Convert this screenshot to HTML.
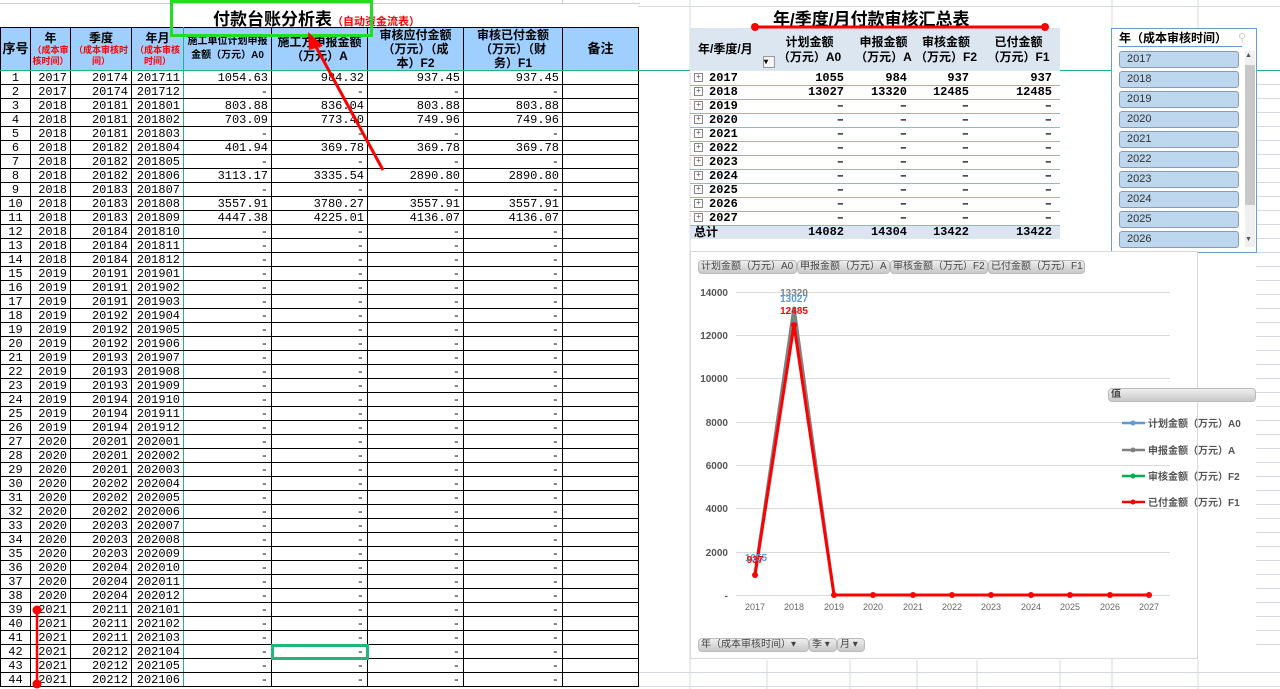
<!DOCTYPE html>
<html><head><meta charset="utf-8"><style>
*{margin:0;padding:0;box-sizing:border-box}
body{width:1280px;height:689px;overflow:hidden;background:#fff;position:relative;font-family:"Liberation Sans","Noto Sans CJK SC",sans-serif}
.abs{position:absolute}
table{border-collapse:collapse;table-layout:fixed}
#lt{position:absolute;left:0;top:27px;width:638px;font-family:"Liberation Mono","Noto Sans CJK SC",monospace;font-size:12px}
#lt td{border:1px solid #000;height:14px;line-height:12px;text-align:right;padding:0 3px;white-space:nowrap;overflow:hidden}
#lt td:first-child{text-align:center;padding:0}
#lt tr.h td{background:#9fcfff;height:43px;text-align:center;font-family:"Liberation Sans","Noto Sans CJK SC",sans-serif;font-weight:bold;font-size:12px;line-height:14px;padding:0;white-space:normal}
#lt td.g{border-right:1px solid #1fb87a}
.r{color:#f00;font-size:9px;line-height:11px;display:block}
#pt{position:absolute;left:690px;top:28px;width:370px;font-family:"Liberation Mono","Noto Sans CJK SC",monospace;font-size:12px;font-weight:bold}
#pt td{height:14px;line-height:12px;text-align:right;padding:0 8px 0 0;border-bottom:1px solid #95b3d7;white-space:nowrap}
#pt tr.h td{background:#dce6f1;height:43px;text-align:center;font-family:"Liberation Sans","Noto Sans CJK SC",sans-serif;line-height:15px;padding:0;border:none}
#pt td.y{text-align:left;padding-left:4px}
.pl{display:inline-block;width:9px;height:9px;border:1px solid #888;font-size:8px;line-height:7px;text-align:center;margin-right:6px;color:#555;font-weight:normal;vertical-align:middle}
#pt tr.t td{background:#dce6f1;border:none}
.sl{position:absolute;left:1119px;width:120px;height:17px;background:#bdd7ee;border:1px solid #8a9bb0;border-radius:3px;font-size:11px;line-height:15px;padding-left:7px;color:#333}
.btn{position:absolute;height:14px;background:linear-gradient(#eee,#c8c8c8);border:1px solid #bbb;border-radius:4px;font-size:10px;line-height:12px;color:#444;white-space:nowrap;padding-left:2px;overflow:hidden}
</style></head><body>
<svg class="abs" style="left:638px;top:0" width="642" height="689">
<g stroke="#d4d8e0" stroke-width="1">
<line x1="52" y1="0" x2="52" y2="689"/>
<line x1="0" y1="6.5" x2="642" y2="6.5"/>
<line x1="474" y1="0" x2="474" y2="689"/>
<line x1="560" y1="0" x2="560" y2="28"/>
<line x1="560" y1="660" x2="560" y2="689"/>
<line x1="129" y1="660" x2="129" y2="689"/><line x1="212" y1="660" x2="212" y2="689"/><line x1="279" y1="660" x2="279" y2="689"/><line x1="339" y1="660" x2="339" y2="689"/><line x1="422" y1="660" x2="422" y2="689"/>
<line x1="0" y1="672.5" x2="642" y2="672.5"/><line x1="0" y1="686.5" x2="642" y2="686.5"/>
</g>
<g stroke="#d4d8e0"><line x1="618" y1="84.5" x2="642" y2="84.5"/><line x1="618" y1="98.5" x2="642" y2="98.5"/><line x1="618" y1="112.5" x2="642" y2="112.5"/><line x1="618" y1="126.5" x2="642" y2="126.5"/><line x1="618" y1="140.5" x2="642" y2="140.5"/><line x1="618" y1="154.5" x2="642" y2="154.5"/><line x1="618" y1="168.5" x2="642" y2="168.5"/><line x1="618" y1="182.5" x2="642" y2="182.5"/><line x1="618" y1="196.5" x2="642" y2="196.5"/><line x1="618" y1="210.5" x2="642" y2="210.5"/><line x1="618" y1="224.5" x2="642" y2="224.5"/><line x1="618" y1="238.5" x2="642" y2="238.5"/><line x1="618" y1="252.5" x2="642" y2="252.5"/><line x1="618" y1="266.5" x2="642" y2="266.5"/><line x1="618" y1="280.5" x2="642" y2="280.5"/><line x1="618" y1="294.5" x2="642" y2="294.5"/><line x1="618" y1="308.5" x2="642" y2="308.5"/><line x1="618" y1="322.5" x2="642" y2="322.5"/><line x1="618" y1="336.5" x2="642" y2="336.5"/><line x1="618" y1="350.5" x2="642" y2="350.5"/><line x1="618" y1="364.5" x2="642" y2="364.5"/><line x1="618" y1="378.5" x2="642" y2="378.5"/><line x1="618" y1="392.5" x2="642" y2="392.5"/><line x1="618" y1="406.5" x2="642" y2="406.5"/><line x1="618" y1="420.5" x2="642" y2="420.5"/><line x1="618" y1="434.5" x2="642" y2="434.5"/><line x1="618" y1="448.5" x2="642" y2="448.5"/><line x1="618" y1="462.5" x2="642" y2="462.5"/><line x1="618" y1="476.5" x2="642" y2="476.5"/><line x1="618" y1="490.5" x2="642" y2="490.5"/><line x1="618" y1="504.5" x2="642" y2="504.5"/><line x1="618" y1="518.5" x2="642" y2="518.5"/><line x1="618" y1="532.5" x2="642" y2="532.5"/><line x1="618" y1="546.5" x2="642" y2="546.5"/><line x1="618" y1="560.5" x2="642" y2="560.5"/><line x1="618" y1="574.5" x2="642" y2="574.5"/><line x1="618" y1="588.5" x2="642" y2="588.5"/><line x1="618" y1="602.5" x2="642" y2="602.5"/><line x1="618" y1="616.5" x2="642" y2="616.5"/><line x1="618" y1="630.5" x2="642" y2="630.5"/><line x1="618" y1="644.5" x2="642" y2="644.5"/></g>
</svg>
<svg class="abs" style="left:0;top:0" width="640" height="28"><g stroke="#ccc"><line x1="0" y1="3.5" x2="640" y2="3.5"/><line x1="183.5" y1="0" x2="183.5" y2="4"/><line x1="562.5" y1="0" x2="562.5" y2="4"/></g></svg>
<div class="abs" style="left:213px;top:5px;font-size:17px;font-weight:bold;white-space:nowrap">付款台账分析表<span style="color:#f00;font-size:11px;font-weight:bold">（自动资金流表）</span></div>
<table id="lt">
<colgroup><col style="width:30px"><col style="width:40px"><col style="width:61px"><col style="width:52px"><col style="width:88px"><col style="width:96px"><col style="width:96px"><col style="width:99px"><col style="width:76px"></colgroup>
<tr class="h"><td style="font-size:13px">序号</td><td>年<span class="r">（成本审核时间）</span></td><td>季度<span class="r">（成本审核时间）</span></td><td class="g">年月<span class="r">（成本审核时间）</span></td><td style="font-size:10px">施工单位计划申报<br>金额（万元）A0</td><td>施工方申报金额<br>（万元）A</td><td>审核应付金额<br>（万元）（成<br>本）F2</td><td>审核已付金额<br>（万元）（财<br>务）F1</td><td style="font-size:13px">备注</td></tr>
<tr><td>1</td><td>2017</td><td>20174</td><td class="g">201711</td><td>1054.63</td><td>984.32</td><td>937.45</td><td>937.45</td><td></td></tr>
<tr><td>2</td><td>2017</td><td>20174</td><td class="g">201712</td><td>-</td><td>-</td><td>-</td><td>-</td><td></td></tr>
<tr><td>3</td><td>2018</td><td>20181</td><td class="g">201801</td><td>803.88</td><td>836.04</td><td>803.88</td><td>803.88</td><td></td></tr>
<tr><td>4</td><td>2018</td><td>20181</td><td class="g">201802</td><td>703.09</td><td>773.40</td><td>749.96</td><td>749.96</td><td></td></tr>
<tr><td>5</td><td>2018</td><td>20181</td><td class="g">201803</td><td>-</td><td>-</td><td>-</td><td>-</td><td></td></tr>
<tr><td>6</td><td>2018</td><td>20182</td><td class="g">201804</td><td>401.94</td><td>369.78</td><td>369.78</td><td>369.78</td><td></td></tr>
<tr><td>7</td><td>2018</td><td>20182</td><td class="g">201805</td><td>-</td><td>-</td><td>-</td><td>-</td><td></td></tr>
<tr><td>8</td><td>2018</td><td>20182</td><td class="g">201806</td><td>3113.17</td><td>3335.54</td><td>2890.80</td><td>2890.80</td><td></td></tr>
<tr><td>9</td><td>2018</td><td>20183</td><td class="g">201807</td><td>-</td><td>-</td><td>-</td><td>-</td><td></td></tr>
<tr><td>10</td><td>2018</td><td>20183</td><td class="g">201808</td><td>3557.91</td><td>3780.27</td><td>3557.91</td><td>3557.91</td><td></td></tr>
<tr><td>11</td><td>2018</td><td>20183</td><td class="g">201809</td><td>4447.38</td><td>4225.01</td><td>4136.07</td><td>4136.07</td><td></td></tr>
<tr><td>12</td><td>2018</td><td>20184</td><td class="g">201810</td><td>-</td><td>-</td><td>-</td><td>-</td><td></td></tr>
<tr><td>13</td><td>2018</td><td>20184</td><td class="g">201811</td><td>-</td><td>-</td><td>-</td><td>-</td><td></td></tr>
<tr><td>14</td><td>2018</td><td>20184</td><td class="g">201812</td><td>-</td><td>-</td><td>-</td><td>-</td><td></td></tr>
<tr><td>15</td><td>2019</td><td>20191</td><td class="g">201901</td><td>-</td><td>-</td><td>-</td><td>-</td><td></td></tr>
<tr><td>16</td><td>2019</td><td>20191</td><td class="g">201902</td><td>-</td><td>-</td><td>-</td><td>-</td><td></td></tr>
<tr><td>17</td><td>2019</td><td>20191</td><td class="g">201903</td><td>-</td><td>-</td><td>-</td><td>-</td><td></td></tr>
<tr><td>18</td><td>2019</td><td>20192</td><td class="g">201904</td><td>-</td><td>-</td><td>-</td><td>-</td><td></td></tr>
<tr><td>19</td><td>2019</td><td>20192</td><td class="g">201905</td><td>-</td><td>-</td><td>-</td><td>-</td><td></td></tr>
<tr><td>20</td><td>2019</td><td>20192</td><td class="g">201906</td><td>-</td><td>-</td><td>-</td><td>-</td><td></td></tr>
<tr><td>21</td><td>2019</td><td>20193</td><td class="g">201907</td><td>-</td><td>-</td><td>-</td><td>-</td><td></td></tr>
<tr><td>22</td><td>2019</td><td>20193</td><td class="g">201908</td><td>-</td><td>-</td><td>-</td><td>-</td><td></td></tr>
<tr><td>23</td><td>2019</td><td>20193</td><td class="g">201909</td><td>-</td><td>-</td><td>-</td><td>-</td><td></td></tr>
<tr><td>24</td><td>2019</td><td>20194</td><td class="g">201910</td><td>-</td><td>-</td><td>-</td><td>-</td><td></td></tr>
<tr><td>25</td><td>2019</td><td>20194</td><td class="g">201911</td><td>-</td><td>-</td><td>-</td><td>-</td><td></td></tr>
<tr><td>26</td><td>2019</td><td>20194</td><td class="g">201912</td><td>-</td><td>-</td><td>-</td><td>-</td><td></td></tr>
<tr><td>27</td><td>2020</td><td>20201</td><td class="g">202001</td><td>-</td><td>-</td><td>-</td><td>-</td><td></td></tr>
<tr><td>28</td><td>2020</td><td>20201</td><td class="g">202002</td><td>-</td><td>-</td><td>-</td><td>-</td><td></td></tr>
<tr><td>29</td><td>2020</td><td>20201</td><td class="g">202003</td><td>-</td><td>-</td><td>-</td><td>-</td><td></td></tr>
<tr><td>30</td><td>2020</td><td>20202</td><td class="g">202004</td><td>-</td><td>-</td><td>-</td><td>-</td><td></td></tr>
<tr><td>31</td><td>2020</td><td>20202</td><td class="g">202005</td><td>-</td><td>-</td><td>-</td><td>-</td><td></td></tr>
<tr><td>32</td><td>2020</td><td>20202</td><td class="g">202006</td><td>-</td><td>-</td><td>-</td><td>-</td><td></td></tr>
<tr><td>33</td><td>2020</td><td>20203</td><td class="g">202007</td><td>-</td><td>-</td><td>-</td><td>-</td><td></td></tr>
<tr><td>34</td><td>2020</td><td>20203</td><td class="g">202008</td><td>-</td><td>-</td><td>-</td><td>-</td><td></td></tr>
<tr><td>35</td><td>2020</td><td>20203</td><td class="g">202009</td><td>-</td><td>-</td><td>-</td><td>-</td><td></td></tr>
<tr><td>36</td><td>2020</td><td>20204</td><td class="g">202010</td><td>-</td><td>-</td><td>-</td><td>-</td><td></td></tr>
<tr><td>37</td><td>2020</td><td>20204</td><td class="g">202011</td><td>-</td><td>-</td><td>-</td><td>-</td><td></td></tr>
<tr><td>38</td><td>2020</td><td>20204</td><td class="g">202012</td><td>-</td><td>-</td><td>-</td><td>-</td><td></td></tr>
<tr><td>39</td><td>2021</td><td>20211</td><td class="g">202101</td><td>-</td><td>-</td><td>-</td><td>-</td><td></td></tr>
<tr><td>40</td><td>2021</td><td>20211</td><td class="g">202102</td><td>-</td><td>-</td><td>-</td><td>-</td><td></td></tr>
<tr><td>41</td><td>2021</td><td>20211</td><td class="g">202103</td><td>-</td><td>-</td><td>-</td><td>-</td><td></td></tr>
<tr><td>42</td><td>2021</td><td>20212</td><td class="g">202104</td><td>-</td><td style="outline:3px solid #1fb87a;outline-offset:-2px">-</td><td>-</td><td>-</td><td></td></tr>
<tr><td>43</td><td>2021</td><td>20212</td><td class="g">202105</td><td>-</td><td>-</td><td>-</td><td>-</td><td></td></tr>
<tr><td>44</td><td>2021</td><td>20212</td><td class="g">202106</td><td>-</td><td>-</td><td>-</td><td>-</td><td></td></tr>
</table>
<div class="abs" style="left:0;top:70px;width:1280px;height:1px;background:#1fb87a"></div>

<div class="abs" style="left:773px;top:5px;font-size:17px;font-weight:bold;white-space:nowrap">年/季度/月付款审核汇总表</div>
<table id="pt">
<colgroup><col style="width:77px"><col style="width:85px"><col style="width:63px"><col style="width:62px"><col style="width:83px"></colgroup>
<tr class="h"><td style="text-align:left;padding-left:8px;position:relative">年/季度/月<span style="position:absolute;left:73px;top:28px;width:12px;height:12px;border:1px solid #999;background:#f4f4f4;font-size:8px;line-height:10px">▾</span></td><td>计划金额<br>（万元）A0</td><td>申报金额<br>（万元）A</td><td>审核金额<br>（万元）F2</td><td>已付金额<br>（万元）F1</td></tr>
<tr><td class="y"><span class="pl">+</span>2017</td><td>1055</td><td>984</td><td>937</td><td>937</td></tr>
<tr><td class="y"><span class="pl">+</span>2018</td><td>13027</td><td>13320</td><td>12485</td><td>12485</td></tr>
<tr><td class="y"><span class="pl">+</span>2019</td><td>–</td><td>–</td><td>–</td><td>–</td></tr>
<tr><td class="y"><span class="pl">+</span>2020</td><td>–</td><td>–</td><td>–</td><td>–</td></tr>
<tr><td class="y"><span class="pl">+</span>2021</td><td>–</td><td>–</td><td>–</td><td>–</td></tr>
<tr><td class="y"><span class="pl">+</span>2022</td><td>–</td><td>–</td><td>–</td><td>–</td></tr>
<tr><td class="y"><span class="pl">+</span>2023</td><td>–</td><td>–</td><td>–</td><td>–</td></tr>
<tr><td class="y"><span class="pl">+</span>2024</td><td>–</td><td>–</td><td>–</td><td>–</td></tr>
<tr><td class="y"><span class="pl">+</span>2025</td><td>–</td><td>–</td><td>–</td><td>–</td></tr>
<tr><td class="y"><span class="pl">+</span>2026</td><td>–</td><td>–</td><td>–</td><td>–</td></tr>
<tr><td class="y"><span class="pl">+</span>2027</td><td>–</td><td>–</td><td>–</td><td>–</td></tr>
<tr class="t"><td class="y" style="font-family:'Liberation Sans','Noto Sans CJK SC',sans-serif">总计</td><td>14082</td><td>14304</td><td>13422</td><td>13422</td></tr>
</table>

<div class="abs" style="left:1111px;top:28px;width:146px;height:225px;border:1px solid #6a9bd3;background:#fff"></div>
<div class="abs" style="left:1119px;top:29px;font-size:12px;font-weight:bold;white-space:nowrap">年（成本审核时间）</div>
<div class="abs" style="left:1118px;top:46px;width:124px;height:1px;background:#6a9bd3"></div>
<div class="abs" style="left:1238px;top:31px;color:#ccc;font-size:11px">⚲</div>
<div class="sl" style="top:51px">2017</div><div class="sl" style="top:71px">2018</div><div class="sl" style="top:91px">2019</div><div class="sl" style="top:111px">2020</div><div class="sl" style="top:131px">2021</div><div class="sl" style="top:151px">2022</div><div class="sl" style="top:171px">2023</div><div class="sl" style="top:191px">2024</div><div class="sl" style="top:211px">2025</div><div class="sl" style="top:231px">2026</div>
<div class="abs" style="left:1245px;top:51px;width:10px;height:196px;background:#f0f0f0"></div>
<div class="abs" style="left:1245px;top:65px;width:10px;height:140px;background:#c8c8c8"></div>
<div class="abs" style="left:1245px;top:52px;font-size:7px;color:#555">▲</div>
<div class="abs" style="left:1245px;top:236px;font-size:7px;color:#555">▼</div>

<div class="abs" style="left:690px;top:251px;width:508px;height:408px;border:1px solid #d9d9d9;background:#fff"></div>
<div class="btn" style="left:698px;top:260px;width:99px">计划金额（万元）A0</div>
<div class="btn" style="left:797px;top:260px;width:93px">申报金额（万元）A</div>
<div class="btn" style="left:890px;top:260px;width:98px">审核金额（万元）F2</div>
<div class="btn" style="left:988px;top:260px;width:97px">已付金额（万元）F1</div>
<div class="btn" style="left:698px;top:638px;width:111px">年（成本审核时间）▾</div>
<div class="btn" style="left:809px;top:638px;width:28px">季 ▾</div>
<div class="btn" style="left:837px;top:638px;width:28px">月 ▾</div>
<div class="btn" style="left:1108px;top:388px;width:148px;font-weight:bold">值</div>
<svg class="abs" style="left:0;top:0" width="1280" height="689">
<g stroke="#d9d9d9" stroke-width="1">
<line x1="736" y1="292.5" x2="1170" y2="292.5"/><line x1="736" y1="335.5" x2="1170" y2="335.5"/><line x1="736" y1="378.5" x2="1170" y2="378.5"/><line x1="736" y1="422.5" x2="1170" y2="422.5"/><line x1="736" y1="465.5" x2="1170" y2="465.5"/><line x1="736" y1="508.5" x2="1170" y2="508.5"/><line x1="736" y1="552.5" x2="1170" y2="552.5"/><line x1="736" y1="595.5" x2="1170" y2="595.5"/>
</g>
<g font-family="Liberation Sans,sans-serif" font-size="10" fill="#555" text-anchor="end" font-weight="bold">
<text x="728" y="296">14000</text><text x="728" y="339">12000</text><text x="728" y="382">10000</text><text x="728" y="426">8000</text><text x="728" y="469">6000</text><text x="728" y="512">4000</text><text x="728" y="556">2000</text><text x="728" y="599">-</text>
</g>
<g font-family="Liberation Sans,sans-serif" font-size="9" fill="#666" text-anchor="middle">
<text x="755" y="610">2017</text><text x="794" y="610">2018</text><text x="834" y="610">2019</text><text x="873" y="610">2020</text><text x="913" y="610">2021</text><text x="952" y="610">2022</text><text x="991" y="610">2023</text><text x="1031" y="610">2024</text><text x="1070" y="610">2025</text><text x="1110" y="610">2026</text><text x="1149" y="610">2027</text>
</g>
<polyline fill="none" stroke="#5b9bd5" stroke-width="2.5" points="755,572 794,313 834,595"/>
<polyline fill="none" stroke="#808080" stroke-width="3" points="755,574 794,307 834,595"/>
<polyline fill="none" stroke="#f00" stroke-width="3" points="755,575 794,325 834,595 1149,595"/>
<g fill="#f00"><circle cx="755" cy="575" r="3"/><circle cx="794" cy="325" r="3"/><circle cx="834" cy="595" r="3"/><circle cx="873" cy="595" r="3"/><circle cx="913" cy="595" r="3"/><circle cx="952" cy="595" r="3"/><circle cx="991" cy="595" r="3"/><circle cx="1031" cy="595" r="3"/><circle cx="1070" cy="595" r="3"/><circle cx="1110" cy="595" r="3"/><circle cx="1149" cy="595" r="3"/></g>
<g font-family="Liberation Sans,sans-serif" font-size="10" font-weight="bold" text-anchor="middle">
<text x="794" y="296" fill="#808080">13320</text><text x="794" y="302" fill="#5b9bd5">13027</text><text x="794" y="314" fill="#f00">12485</text>
<text x="756" y="561" fill="#5b9bd5">1055</text><text x="755" y="563" fill="#f00">937</text>
</g>
<g stroke-width="2.5">
<line x1="1122" y1="423" x2="1145" y2="423" stroke="#5b9bd5"/><line x1="1122" y1="450" x2="1145" y2="450" stroke="#808080"/><line x1="1122" y1="476" x2="1145" y2="476" stroke="#00b050"/><line x1="1122" y1="502" x2="1145" y2="502" stroke="#f00"/>
</g>
<g><circle cx="1133" cy="423" r="2.5" fill="#5b9bd5"/><circle cx="1133" cy="450" r="2.5" fill="#808080"/><circle cx="1133" cy="476" r="2.5" fill="#00b050"/><circle cx="1133" cy="502" r="2.5" fill="#f00"/></g>
<g font-family="Liberation Sans,Noto Sans CJK SC,sans-serif" font-size="10" fill="#555" font-weight="bold">
<text x="1148" y="427">计划金额（万元）A0</text><text x="1148" y="454">申报金额（万元）A</text><text x="1148" y="480">审核金额（万元）F2</text><text x="1148" y="506">已付金额（万元）F1</text>
</g>
<rect x="171.5" y="1.5" width="200" height="34" fill="none" stroke="#22dd22" stroke-width="3"/>
<line x1="383" y1="170" x2="315" y2="45" stroke="#f00" stroke-width="3"/>
<polygon points="308,32 323,46 309,50" fill="#f00"/>
<line x1="755" y1="27" x2="1045" y2="27" stroke="#f00" stroke-width="3"/>
<circle cx="755" cy="27" r="4" fill="#f00"/><circle cx="1045" cy="27" r="4" fill="#f00"/>
<line x1="37" y1="610" x2="37" y2="684" stroke="#f00" stroke-width="2.5"/>
<circle cx="37" cy="610" r="4.5" fill="#f00"/><circle cx="37" cy="684" r="4.5" fill="#f00"/>
</svg>
</body></html>
